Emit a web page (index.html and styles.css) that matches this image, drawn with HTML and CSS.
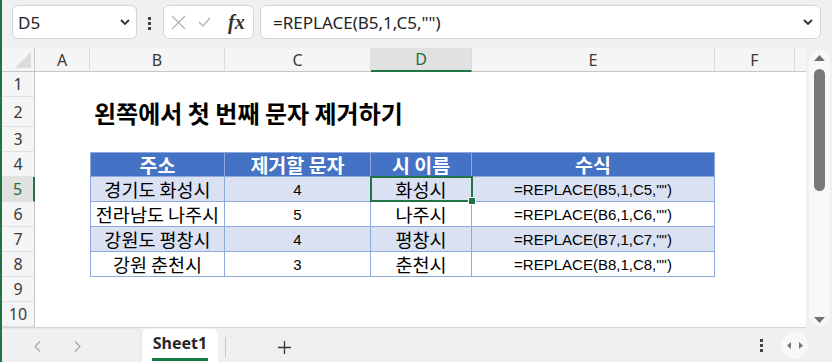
FILE: index.html
```html
<!DOCTYPE html>
<html>
<head>
  <meta charset="utf-8">
  <title>REPLACE - Sheet1</title>
  <link rel="stylesheet" href="styles.css">
</head>
<body>
  <div class="app">
    <div class="topbar">
      <div class="namebox">
        <span>D5</span>
        <svg class="chev" viewBox="0 0 10 6"><path d="M1 1l4 4 4-4"/></svg>
      </div>
      <div class="grip"><i></i><i></i><i></i></div>
      <div class="fxbox">
        <svg class="ico-x" viewBox="0 0 15 15"><path d="M1 1L14 14M14 1L1 14"/></svg>
        <svg class="ico-check" viewBox="0 0 13 10"><path d="M1 5l4 4 7-8"/></svg>
        <span class="fx">fx</span>
      </div>
      <div class="formula">
        <span>=REPLACE(B5,1,C5,"")</span>
        <svg class="chev" viewBox="0 0 10 6"><path d="M1 1l4 4 4-4"/></svg>
      </div>
    </div>

    <div class="main">
      <div class="grid">
        <div class="corner"><svg viewBox="0 0 16 16"><path d="M16 0V16H0Z"/></svg></div>
        <div class="ch">A</div>
        <div class="ch">B</div>
        <div class="ch">C</div>
        <div class="ch ch-active">D</div>
        <div class="ch">E</div>
        <div class="ch">F</div>
        <div class="ch ch-last"></div>

        <div class="rh">1</div>
        <div class="c span7"></div>

        <div class="rh">2</div>
        <div class="c"></div>
        <div class="title">왼쪽에서 첫 번째 문자 제거하기</div>

        <div class="rh">3</div>
        <div class="c span7"></div>

        <div class="rh">4</div>
        <div class="c"></div>
        <div class="t th first">주소</div>
        <div class="t th">제거할 문자</div>
        <div class="t th">시 이름</div>
        <div class="t th">수식</div>
        <div class="c span2"></div>

        <div class="rh rh-active">5</div>
        <div class="c"></div>
        <div class="t alt first">경기도 화성시</div>
        <div class="t alt num">4</div>
        <div class="t alt active">화성시<span class="sel"></span><span class="handle"></span></div>
        <div class="t alt fml">=REPLACE(B5,1,C5,"")</div>
        <div class="c span2"></div>

        <div class="rh">6</div>
        <div class="c"></div>
        <div class="t first">전라남도 나주시</div>
        <div class="t num">5</div>
        <div class="t">나주시</div>
        <div class="t fml">=REPLACE(B6,1,C6,"")</div>
        <div class="c span2"></div>

        <div class="rh">7</div>
        <div class="c"></div>
        <div class="t alt first">강원도 평창시</div>
        <div class="t alt num">4</div>
        <div class="t alt">평창시</div>
        <div class="t alt fml">=REPLACE(B7,1,C7,"")</div>
        <div class="c span2"></div>

        <div class="rh">8</div>
        <div class="c"></div>
        <div class="t first">강원 춘천시</div>
        <div class="t num">3</div>
        <div class="t">춘천시</div>
        <div class="t fml">=REPLACE(B8,1,C8,"")</div>
        <div class="c span2"></div>

        <div class="rh">9</div>
        <div class="c span7"></div>

        <div class="rh">10</div>
        <div class="c span7"></div>
      </div>

      <div class="vscroll">
        <div class="vtrack">
          <svg class="tri" viewBox="0 0 11 6"><path d="M5.5 0L11 6H0Z"/></svg>
          <div class="thumb"></div>
          <svg class="tri tri-down" viewBox="0 0 11 6"><path d="M0 0H11L5.5 6Z"/></svg>
        </div>
      </div>
    </div>

    <div class="tabbar">
      <div class="navpanel">
        <svg class="nav" viewBox="0 0 7 11"><path d="M6 0.5L1 5.5l5 5"/></svg>
        <svg class="nav" viewBox="0 0 7 11"><path d="M1 0.5l5 5-5 5"/></svg>
      </div>
      <div class="tab"><span>Sheet1</span></div>
      <div class="sep"></div>
      <svg class="plus" viewBox="0 0 13 13"><path d="M6.5 0V13M0 6.5H13"/></svg>
      <div class="rightpanel">
        <div class="grip grip-small"><i></i><i></i><i></i></div>
        <div class="hnav">
          <svg viewBox="0 0 4 7"><path d="M4 0V7L0 3.5Z"/></svg>
          <svg viewBox="0 0 4 7"><path d="M0 0L4 3.5 0 7Z"/></svg>
        </div>
      </div>
    </div>
  </div>
</body>
</html>
```

FILE: styles.css
```css
* {
  margin: 0;
  padding: 0;
  box-sizing: border-box;
}

body {
  width: 832px;
  height: 362px;
  overflow: hidden;
  background: #f0f0f0;
  font-family: 'Noto Sans', sans-serif;
  color: #222;
}

.app {
  height: 362px;
  border-left: 2px solid #217346;
  display: flex;
  flex-direction: column;
}

/* formula bar */

.topbar {
  height: 48px;
  display: flex;
  align-items: flex-start;
  padding: 5px 11px 0 10px;
}

.namebox {
  width: 125px;
  height: 34px;
  background: #fff;
  border: 1px solid #d4d4d4;
  border-radius: 6px;
  display: flex;
  align-items: center;
  justify-content: space-between;
  padding: 0 6px 0 5px;
  font-size: 17px;
}

.chev {
  width: 10px;
  height: 6px;
  fill: none;
  stroke: #333;
  stroke-width: 1.8;
}

.grip {
  width: 3px;
  margin: 12px 12px 0 11px;
  display: flex;
  flex-direction: column;
  gap: 2px;
}

.grip i {
  display: block;
  width: 3px;
  height: 3px;
  background: #444;
}

.fxbox {
  width: 91px;
  height: 34px;
  background: #fff;
  border: 1px solid #d4d4d4;
  border-radius: 6px;
  display: flex;
  align-items: center;
  padding-left: 7px;
}

.ico-x {
  width: 15px;
  height: 15px;
  fill: none;
  stroke: #b0b0b0;
  stroke-width: 1.2;
}

.ico-check {
  width: 13px;
  height: 10px;
  margin-left: 12px;
  fill: none;
  stroke: #b0b0b0;
  stroke-width: 1.2;
}

.fx {
  margin-left: 17px;
  font-family: 'Liberation Serif', serif;
  font-style: italic;
  font-weight: bold;
  font-size: 20px;
  color: #333;
}

.formula {
  flex: 1;
  margin-left: 6px;
  height: 34px;
  background: #fff;
  border: 1px solid #d4d4d4;
  border-radius: 6px;
  display: flex;
  align-items: center;
  justify-content: space-between;
  padding: 0 7px 0 12px;
  font-size: 17px;
}

/* sheet grid */

.main {
  height: 280px;
  display: flex;
}

.grid {
  display: grid;
  grid-template-columns: 33px 55px 135px 146px 101px 243px 80px 11px;
  grid-template-rows: 24px 25px 30px repeat(8, 25px);
  height: 280px;
  background: #fff;
  border-bottom: 1px solid #d4d4d4;
}

.corner {
  background: #f5f5f5;
  border-right: 1px solid #c6c6c6;
  border-bottom: 1px solid #c6c6c6;
  display: flex;
  align-items: flex-end;
  justify-content: flex-end;
  padding: 0 3px 3px 0;
}

.corner svg {
  width: 16px;
  height: 16px;
  fill: #dcdcdc;
}

.ch {
  background: #f5f5f5;
  border-right: 1px solid #dadada;
  border-bottom: 1px solid #c6c6c6;
  display: flex;
  align-items: center;
  justify-content: center;
  font-size: 16px;
  color: #3a3a3a;
}

.ch-last {
  border-right: none;
}

.ch-active {
  background: #e1e1e1;
  color: #1d6b3f;
  border-bottom: 2px solid #217346;
}

.rh {
  background: #f5f5f5;
  border-right: 1px solid #c6c6c6;
  border-bottom: 1px solid #e1e1e1;
  display: flex;
  align-items: center;
  justify-content: center;
  font-size: 16px;
  color: #3a3a3a;
}

.rh-active {
  background: #e1e1e1;
  color: #1d6b3f;
  border-right: 2px solid #217346;
}

.span2 {
  grid-column: span 2;
}

.span7 {
  grid-column: span 7;
}

.title {
  grid-column: span 6;
  display: flex;
  align-items: center;
  padding-left: 4px;
  font-family: 'Noto Sans CJK KR', sans-serif;
  font-weight: bold;
  font-size: 24px;
  color: #000;
  white-space: nowrap;
}

.t {
  display: flex;
  align-items: center;
  justify-content: center;
  border-right: 1px solid #8ea9db;
  border-bottom: 1px solid #8ea9db;
  font-family: 'Noto Sans CJK KR', sans-serif;
  font-size: 18.5px;
  line-height: 1;
  color: #000;
  white-space: nowrap;
}

.t.first {
  border-left: 1px solid #8ea9db;
}

.th {
  background: #4472c4;
  color: #fff;
  font-weight: bold;
  font-size: 19.5px;
  border-top: 1px solid #8ea9db;
}

.alt {
  background: #d9e1f2;
}

.num {
  font-family: 'Liberation Sans', sans-serif;
  font-size: 15px;
}

.fml {
  font-family: 'Liberation Sans', sans-serif;
  font-size: 15px;
}

.active {
  position: relative;
}

.sel {
  position: absolute;
  top: -1px;
  left: -1px;
  right: -2px;
  bottom: -1px;
  border: 2px solid #217346;
  z-index: 2;
}

.handle {
  position: absolute;
  right: -5px;
  bottom: -4px;
  width: 8px;
  height: 8px;
  background: #217346;
  border: 1px solid #fff;
  z-index: 3;
}

/* vertical scrollbar */

.vscroll {
  width: 26px;
  padding: 2px 2px 2px 3px;
}

.vtrack {
  height: 100%;
  background: #f8f8f8;
  border-radius: 10px;
  display: flex;
  flex-direction: column;
  align-items: center;
  padding: 5px 0 3px;
}

.tri {
  width: 11px;
  height: 6px;
  fill: #707070;
}

.tri-down {
  margin-top: auto;
}

.thumb {
  width: 11px;
  height: 122px;
  margin-top: 8px;
  background: #787878;
  border-radius: 6px;
}

/* sheet tabs */

.tabbar {
  height: 34px;
  display: flex;
}

.navpanel {
  width: 140px;
  display: flex;
  align-items: center;
  gap: 33px;
  padding: 1px 0 0 32px;
  border-top: 1px solid #e6e6e6;
  border-right: 1px solid #e6e6e6;
  border-top-right-radius: 8px;
}

.nav {
  width: 7px;
  height: 11px;
  fill: none;
  stroke: #a6a6a6;
  stroke-width: 1.2;
}

.tab {
  width: 76px;
  margin-top: 1px;
  background: #fff;
  border-radius: 6px 6px 0 0;
  display: flex;
  justify-content: center;
  padding-top: 4px;
}

.tab span {
  height: 28px;
  line-height: 20px;
  padding: 0 1px 4px;
  border-bottom: 3px solid #107c41;
  font-size: 16px;
  font-weight: bold;
  color: #262626;
}

.sep {
  width: 1px;
  height: 20px;
  margin: 9px 0 0 7px;
  background: #c8c8c8;
}

.plus {
  width: 13px;
  height: 13px;
  margin: 13px 0 0 52px;
  fill: none;
  stroke: #333;
  stroke-width: 1.3;
}

.rightpanel {
  margin-left: auto;
  display: flex;
  align-items: center;
  padding-right: 24px;
}

.grip-small {
  margin: 0 18px 0 0;
}

.hnav {
  width: 27px;
  height: 27px;
  border-radius: 50%;
  background: #f8f8f8;
  display: flex;
  align-items: center;
  justify-content: center;
  gap: 8px;
}

.hnav svg {
  width: 4px;
  height: 7px;
  fill: #777;
}
```
